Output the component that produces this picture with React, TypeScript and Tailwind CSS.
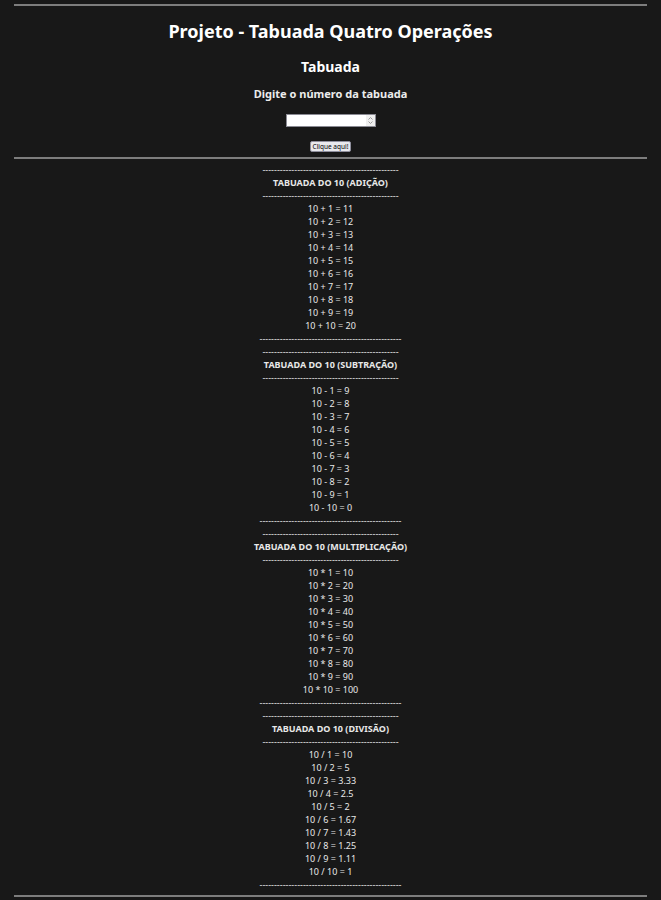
const n = 10;

const ops = [
  { titulo: "ADIÇÃO", sinal: "+", calc: (a: number, b: number) => a + b },
  { titulo: "SUBTRAÇÃO", sinal: "-", calc: (a: number, b: number) => a - b },
  { titulo: "MULTIPLICAÇÃO", sinal: "*", calc: (a: number, b: number) => a * b },
  { titulo: "DIVISÃO", sinal: "/", calc: (a: number, b: number) => Number((a / b).toFixed(2)) },
];

const dashShort = "-".repeat(47);
const dashLong = "-".repeat(49);

function Secao({ titulo, sinal, calc }: (typeof ops)[number]) {
  return (
    <div className="flex h-[182px] flex-col items-center overflow-hidden text-[9px] leading-[13px] text-[#e8e8e8]">
      <p className="h-[13px] shrink-0">{dashShort}</p>
      <p className="h-[13px] shrink-0 font-bold">TABUADA DO {n} ({titulo})</p>
      <p className="h-[13px] shrink-0">{dashShort}</p>
      {Array.from({ length: 10 }, (_, i) => (
        <p key={i} className="h-[13px] shrink-0">
          {n} {sinal} {i + 1} = {calc(n, i + 1)}
        </p>
      ))}
      <p className="h-[13px] shrink-0">{dashLong}</p>
    </div>
  );
}

export default function App() {
  return (
    <div
      className="min-h-[900px] bg-[#181818] text-white pt-[4px]"
      style={{ fontFamily: '"Noto Sans", "Open Sans", sans-serif' }}
    >
      <hr className="mx-[14px] border-t-[2px] border-[#7d7d7d]" />
      <div className="flex flex-col items-center">
        <h1 className="mt-[12px] h-[26px] text-[18px] font-bold leading-[26px]">
          Projeto - Tabuada Quatro Operações
        </h1>
        <h2 className="mt-[13px] h-[20px] text-[14px] font-bold leading-[20px]">Tabuada</h2>
        <p className="mt-[9px] h-[16px] text-[11px] font-bold leading-[16px] text-[#ececec]">
          Digite o número da tabuada
        </p>
        <div className="mt-[12px] flex h-[13px] w-[90px] border border-[#8a8a93] bg-white">
          <div className="flex-1" />
          <div className="flex w-[9px] items-center justify-center bg-[#efefef]">
            <svg width="5" height="9" viewBox="0 0 5 9" fill="none" stroke="#9a9a9a" strokeWidth="1">
              <path d="M0.5 3.5 L2.5 1.5 L4.5 3.5" />
              <path d="M0.5 5.5 L2.5 7.5 L4.5 5.5" />
            </svg>
          </div>
        </div>
        <button
          type="button"
          className="mt-[14px] h-[11px] rounded-[2px] border border-[#8f8f9d] bg-[#e9e9ed] px-[2px] text-[6.5px] leading-[9px] text-black"
        >
          Clique aqui!
        </button>
      </div>
      <hr className="mx-[14px] mt-[5px] border-t-[2px] border-[#7d7d7d]" />
      <div className="mt-[4px] flex flex-col">
        {ops.map((op) => (
          <Secao key={op.titulo} {...op} />
        ))}
      </div>
      <hr className="mx-[14px] mt-[4px] border-t-[2px] border-[#7d7d7d]" />
    </div>
  );
}
